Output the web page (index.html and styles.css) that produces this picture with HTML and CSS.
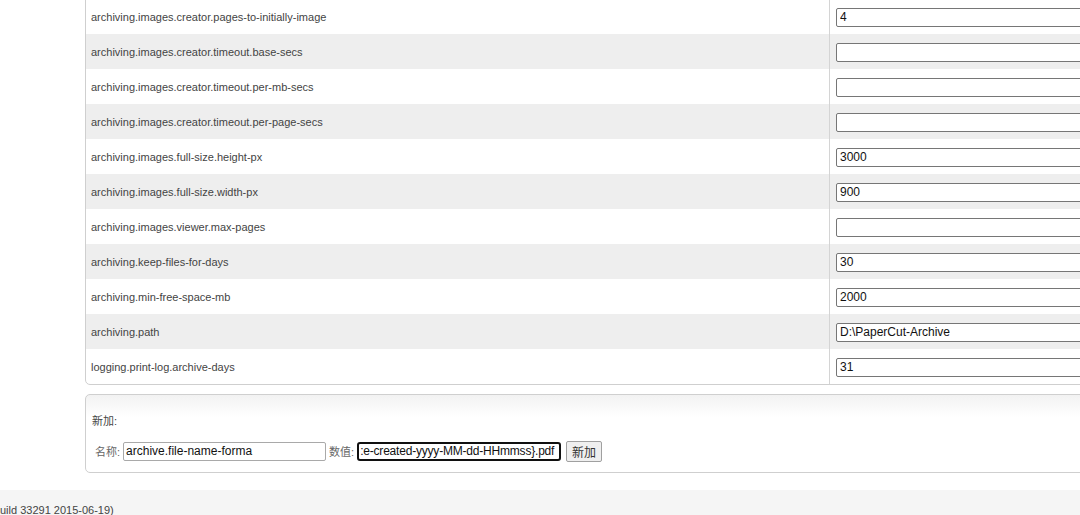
FILE: index.html
```html
<!DOCTYPE html>
<html>
<head>
<meta charset="utf-8">
<link rel="stylesheet" href="styles.css">
</head>
<body>
<div class="page">
  <div class="content">
    <table class="config">
      <colgroup><col class="c-key"><col class="c-val"></colgroup>
      <tr><td class="key">archiving.images.creator.pages-to-initially-image</td><td class="val"><input class="field" value="4"></td></tr>
      <tr class="alt"><td class="key">archiving.images.creator.timeout.base-secs</td><td class="val"><input class="field" value=""></td></tr>
      <tr><td class="key">archiving.images.creator.timeout.per-mb-secs</td><td class="val"><input class="field" value=""></td></tr>
      <tr class="alt"><td class="key">archiving.images.creator.timeout.per-page-secs</td><td class="val"><input class="field" value=""></td></tr>
      <tr><td class="key">archiving.images.full-size.height-px</td><td class="val"><input class="field" value="3000"></td></tr>
      <tr class="alt"><td class="key">archiving.images.full-size.width-px</td><td class="val"><input class="field" value="900"></td></tr>
      <tr><td class="key">archiving.images.viewer.max-pages</td><td class="val"><input class="field" value=""></td></tr>
      <tr class="alt"><td class="key">archiving.keep-files-for-days</td><td class="val"><input class="field" value="30"></td></tr>
      <tr><td class="key">archiving.min-free-space-mb</td><td class="val"><input class="field" value="2000"></td></tr>
      <tr class="alt"><td class="key">archiving.path</td><td class="val"><input class="field" value="D:\PaperCut-Archive"></td></tr>
      <tr><td class="key">logging.print-log.archive-days</td><td class="val"><input class="field" value="31"></td></tr>
    </table>
    <div class="addbox">
      <div class="addtitle">新加:</div>
      <div class="addrow">
        <span class="lbl">名称:</span>
        <span class="small first">archive.file-name-forma</span>
        <span class="lbl">数值:</span>
        <span class="small focus">:e-created-yyyy-MM-dd-HHmmss}.pdf</span>
        <button class="btn">新加</button>
      </div>
    </div>
  </div>
  <div class="footer">uild 33291 2015-06-19)</div>
</div>
</body>
</html>
```
FILE: styles.css
```css
html, body {
  margin: 0;
  padding: 0;
  background: #ffffff;
  overflow: hidden;
}
body {
  width: 1080px;
  height: 515px;
  font-family: "Liberation Sans", Arial, "Noto Sans CJK SC", sans-serif;
  color: #444;
}
.page {
  width: 1080px;
  overflow: hidden;
}
.content {
  margin-left: 85px;
  width: 1100px;
  margin-top: -2px;
}
.config {
  border-collapse: separate;
  border-spacing: 0;
  table-layout: fixed;
  width: 1100px;
  border: 1px solid #cfcfcf;
  border-radius: 0 0 5px 5px;
  font-size: 11px;
}
.c-key { width: 744px; }
.c-val { width: auto; }
.config tr { height: 35px; }
.config tr.alt td { background: #eeeeee; }
.config td { padding: 0; vertical-align: middle; }
.config tr:last-child td.key { border-bottom-left-radius: 5px; }
.key {
  padding-left: 5px !important;
  border-right: 1px solid #d4d4d4;
  color: #444;
  white-space: nowrap;
}
.val {
  padding-left: 6px !important;
  padding-top: 1px !important;
}
.field {
  display: block;
  box-sizing: border-box;
  width: 400px;
  height: 19px;
  margin: 0;
  padding: 0 3px;
  border: 1px solid #767676;
  border-radius: 2px;
  font-family: "Liberation Sans", Arial, sans-serif;
  font-size: 12px;
  color: #111;
  background: #fff;
}
.addbox {
  margin-top: 9px;
  width: 1100px;
  height: 79px;
  border: 1px solid #cfcfcf;
  border-radius: 5px;
  background: linear-gradient(#f2f2f2 0px, #ffffff 22px);
  box-sizing: border-box;
  padding-top: 19px;
  padding-left: 6px;
}
.addtitle {
  font-size: 11px;
  line-height: 14px;
  height: 14px;
  color: #444;
}
.addrow {
  margin-top: 12px;
  display: flex;
  align-items: center;
  padding-left: 3px;
  height: 22px;
}
.lbl {
  font-family: "Liberation Sans", Arial, "Noto Sans CJK SC", sans-serif;
  font-size: 11px;
  color: #666;
  margin-right: 3px;
}
.small {
  box-sizing: border-box;
  width: 204px;
  height: 19px;
  line-height: 17px;
  border: 1px solid #767676;
  border-radius: 2px;
  padding: 0 2px;
  font-size: 12px;
  color: #111;
  white-space: nowrap;
  overflow: hidden;
  background: #fff;
}
.small.first {
  width: 203px;
  border-color: #a9a9a9;
  margin-right: 3px;
}
.small.focus {
  border: 2px solid #101010;
  border-radius: 3px;
  line-height: 15px;
  padding: 0 0 0 1px;
  letter-spacing: -0.2px;
  margin-right: 5px;
}
.btn {
  box-sizing: border-box;
  width: 36px;
  height: 21px;
  padding: 0;
  border: 1px solid #a0a0a0;
  border-radius: 2px;
  background: #efefef;
  font-family: "Noto Sans CJK SC", sans-serif;
  font-size: 12px;
  line-height: 19px;
  color: #333;
}
.footer {
  margin-top: 17px;
  height: 40px;
  background: #f5f5f5;
  font-size: 11px;
  color: #444;
  padding-top: 14px;
  box-sizing: border-box;
  line-height: 12px;
}
```
